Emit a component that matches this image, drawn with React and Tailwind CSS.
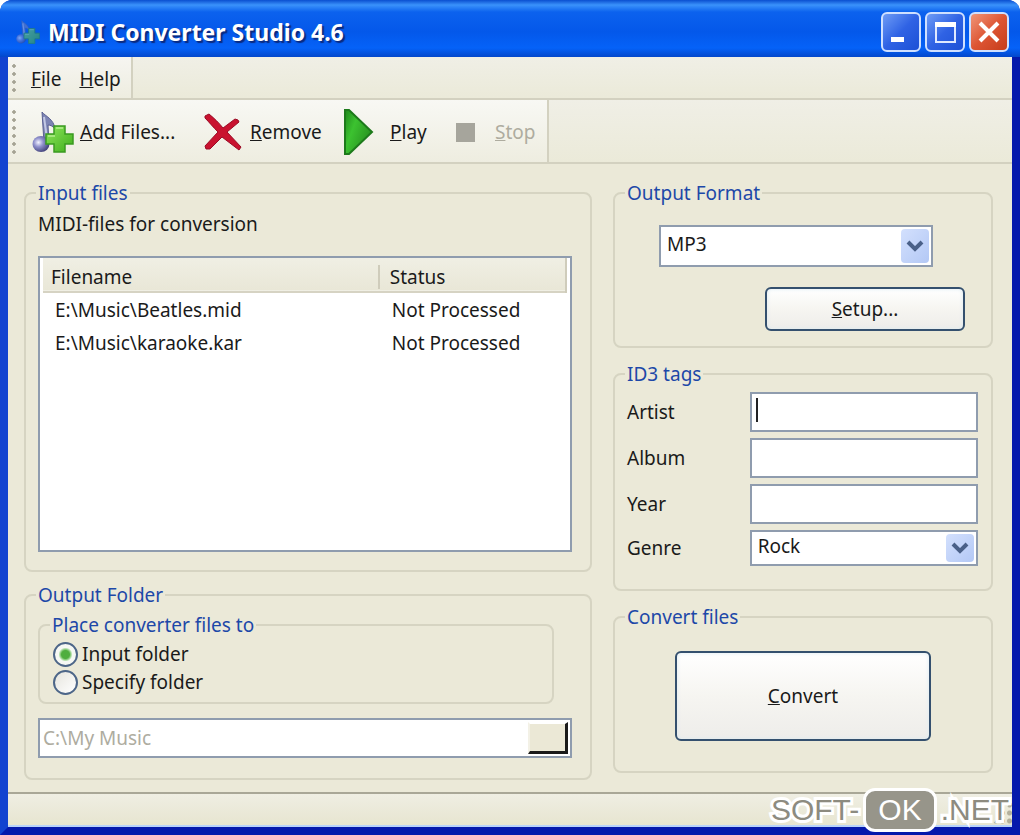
import { useState } from 'react';

const files = [
  { name: 'E:\\Music\\Beatles.mid', status: 'Not Processed' },
  { name: 'E:\\Music\\karaoke.kar', status: 'Not Processed' },
];

function NoteIcon({ className }) {
  return (
    <svg viewBox="0 0 42 42" className={className} aria-hidden="true">
      <defs>
        <radialGradient id="noteHead" cx="0.35" cy="0.4" r="0.7">
          <stop offset="0" stopColor="#f4f4ff" />
          <stop offset="0.4" stopColor="#8f90cc" />
          <stop offset="1" stopColor="#38386f" />
        </radialGradient>
        <linearGradient id="plusFill" x1="0" y1="0" x2="1" y2="1">
          <stop offset="0" stopColor="#8fe65c" />
          <stop offset="1" stopColor="#3fae1c" />
        </linearGradient>
      </defs>
      <path d="M10 1 C13 5 22 8 23 18 C21 15 18 14 16 14 L17 32 L12 32 Z" fill="#7d84b4" stroke="#5a6092" strokeWidth="1" />
      <path d="M12 6 L15 28" stroke="#c3c8e4" strokeWidth="2" />
      <ellipse cx="9" cy="33" rx="8.5" ry="8" fill="url(#noteHead)" />
      <path d="M22 15 h11 v8 h8 v10 h-8 v8 h-11 v-8 h-8 v-10 h8 z" fill="url(#plusFill)" stroke="#3a9a20" strokeWidth="1.5" />
      <path d="M24 17 h7 M16 25 h7" stroke="#b5f08e" strokeWidth="1.5" />
    </svg>
  );
}

function RemoveIcon() {
  return (
    <svg viewBox="0 0 38 38" className="h-[38px] w-[38px]" aria-hidden="true">
      <path d="M1 3 L5 1 C11 6 15 10 19 15 L31 6 L34 7 L35 9 L23 19 L37 34 L35 37 L18 24 L6 36 L2 36 L1 33 L14 19 C9 14 5 9 1 5 Z" fill="#c9122f" stroke="#9a0c26" strokeWidth="1" />
    </svg>
  );
}

function PlayIcon() {
  return (
    <svg viewBox="0 0 30 46" className="h-[46px] w-[30px]" aria-hidden="true">
      <defs>
        <linearGradient id="playFill" x1="0" y1="0" x2="1" y2="0.6">
          <stop offset="0" stopColor="#1f8a1c" />
          <stop offset="0.4" stopColor="#3cc230" />
          <stop offset="1" stopColor="#27901f" />
        </linearGradient>
      </defs>
      <path d="M1 1 H5 L28 23 L5 45 H1 Z" fill="url(#playFill)" stroke="#1d7a1b" strokeWidth="2" />
    </svg>
  );
}

function Grip({ className }) {
  return (
    <div className={`w-1 bg-[radial-gradient(circle,#a5a394_1.5px,transparent_2px)] bg-[length:4px_8px] ${className}`} />
  );
}

function GroupBox({ title, className, children }) {
  return (
    <fieldset className={`min-w-0 rounded-lg border-2 border-[#d6d4c2] pl-[10px] ${className}`}>
      <legend className="px-[2px] leading-6 text-[#1d48a8]">{title}</legend>
      {children}
    </fieldset>
  );
}

function Select({ id, label, value, options, onChange, className }) {
  return (
    <div className={`relative ${className}`}>
      <select
        id={id}
        aria-label={label}
        value={value}
        onChange={(e) => onChange(e.target.value)}
        className="block h-full w-full appearance-none border-2 border-[#8f9cae] bg-white pb-1 pl-[6px] outline-none"
      >
        {options.map((o) => (
          <option key={o}>{o}</option>
        ))}
      </select>
      <span className="pointer-events-none absolute inset-y-1 right-1 flex w-7 items-center justify-center rounded-sm bg-linear-to-br from-[#d3e0fd] to-[#b3c8f5]">
        <svg viewBox="0 0 18 12" className="h-3 w-[18px]" aria-hidden="true">
          <path d="M2 2 L9 9 L16 2" fill="none" stroke="#4a6088" strokeWidth="4" />
        </svg>
      </span>
    </div>
  );
}

function TitleBar() {
  const button = 'flex h-10 w-10 items-center justify-center rounded-md border-2 border-[#cfe0ff]';
  return (
    <header className="flex h-[57px] items-center bg-[linear-gradient(180deg,#0a4fd0_0,#3a92fb_5px,#0c62ee_12px,#0458ea_32px,#0562f8_48px,#0347cb_57px)] pt-[6px] pr-[11px] pl-4">
      <NoteIcon className="h-6 w-6 opacity-50" />
      <h1 className="ml-2 flex-1 text-[23px] leading-8 font-bold text-white [text-shadow:2px_2px_1px_#0a2a80]">
        MIDI Converter Studio 4.6
      </h1>
      <div className="flex gap-1">
        <button type="button" aria-label="Minimize" className={`${button} bg-linear-to-br from-[#6f9bf5] via-[#2f62e4] to-[#1c50d6]`}>
          <svg viewBox="0 0 24 24" className="h-6 w-6"><path d="M2 17 h13 v5 h-13 z" fill="#fff" /></svg>
        </button>
        <button type="button" aria-label="Maximize" className={`${button} bg-linear-to-br from-[#6f9bf5] via-[#2f62e4] to-[#1c50d6]`}>
          <svg viewBox="0 0 24 24" className="h-6 w-6"><path d="M3 3 h19 v19 h-19 z" fill="none" stroke="#dfe9ff" strokeWidth="2" /><path d="M2 2 h21 v5 h-21 z" fill="#fff" /></svg>
        </button>
        <button type="button" aria-label="Close" className={`${button} bg-linear-to-br from-[#ef9478] via-[#dd5533] to-[#c63c1a]`}>
          <svg viewBox="0 0 24 24" className="h-6 w-6"><path d="M3 3 L21 21 M21 3 L3 21" stroke="#fff" strokeWidth="4" /></svg>
        </button>
      </div>
    </header>
  );
}

function ToolBars() {
  return (
    <>
      <nav className="flex h-[43px] items-stretch border-b-2 border-[#d3d1c0] bg-linear-to-b from-[#f0efe6] to-[#ebead9]">
        <div className="flex items-center border-r-2 border-[#d3d1c0] bg-linear-to-b from-[#f6f5f1] to-[#eeede0] pr-[10px] pl-1">
          <Grip className="h-8" />
          <button type="button" className="ml-[15px] pt-[3px] leading-6"><u>F</u>ile</button>
          <button type="button" className="ml-[18px] pt-[3px] leading-6"><u>H</u>elp</button>
        </div>
      </nav>
      <div className="flex h-16 items-stretch border-b-2 border-[#d3d1c0] bg-linear-to-b from-[#f0efe6] to-[#ebead9]">
        <div className="flex items-center border-r-2 border-[#d3d1c0] bg-linear-to-b from-[#f8f8f4] to-[#eeede0] pt-[2px] pr-[10px] pl-1">
          <Grip className="h-12" />
          <button type="button" className="ml-4 flex items-center gap-[6px] leading-6">
            <NoteIcon className="h-[42px] w-[42px]" />
            <span className="w-[104px] text-left"><u>A</u>dd Files...</span>
          </button>
          <button type="button" className="ml-5 flex items-center gap-2 leading-6">
            <RemoveIcon />
            <span className="w-[76px] text-left"><u>R</u>emove</span>
          </button>
          <button type="button" className="ml-[18px] flex items-center gap-4 leading-6">
            <PlayIcon />
            <span className="w-10 text-left"><u>P</u>lay</span>
          </button>
          <button type="button" disabled className="ml-[26px] flex items-center gap-5 leading-6 text-[#aeac9f]">
            <span className="h-[19px] w-[19px] bg-[#a6a59c]" />
            <span className="w-[42px] text-left"><u>S</u>top</span>
          </button>
        </div>
      </div>
    </>
  );
}

function TagField({ id, label, caret }) {
  return (
    <>
      <label htmlFor={id} className="leading-6">{label}</label>
      <div className="relative">
        <input id={id} type="text" className="block h-10 w-full border-2 border-[#8f9cae] bg-white px-1 caret-transparent outline-none" />
        {caret && <span className="absolute top-[6px] left-[6px] h-6 w-[2px] bg-[#222]" />}
      </div>
    </>
  );
}

function Watermark() {
  return (
    <div className="pointer-events-none absolute right-[11px] bottom-[3px] flex items-center gap-1 font-['Liberation_Sans',sans-serif] text-[30px] leading-8 text-[#8d8b80]">
      <span className="[-webkit-text-stroke:6px_#fff] [paint-order:stroke]">SOFT-</span>
      <span className="rounded-xl border-[3px] border-white bg-[#97958a] px-3 py-[3px] text-white">OK</span>
      <span className="[-webkit-text-stroke:6px_#fff] [paint-order:stroke]">.NET</span>
    </div>
  );
}

export default function App() {
  const [format, setFormat] = useState('MP3');
  const [genre, setGenre] = useState('Rock');
  const [target, setTarget] = useState('input');

  const radio =
    'h-[25px] w-[25px] shrink-0 appearance-none rounded-full border-2 border-[#4d6688] bg-white bg-linear-to-br from-[#e6e5de] to-white checked:bg-[radial-gradient(circle,#4fae3f_4px,#b9e2b0_6px,#f6f8f4_7px)]';
  const pushButton =
    'rounded-md border-2 border-[#34506e] bg-linear-to-b from-white via-[#f6f5f1] to-[#eeedea] shadow-[inset_0_0_4px_#dcebf2]';

  return (
    <div className="relative flex min-h-screen flex-col overflow-hidden rounded-t-xl bg-[#0a3fd0] font-['Noto_Sans',sans-serif] text-[19px] text-[#1a1a1a]">
      <TitleBar />
      <div className="flex flex-1 flex-col border-x-8 border-b-8 border-r-[#0519ac] border-b-[#0519ac] border-l-[#1243d0]">
        <ToolBars />
        <main className="grid flex-1 grid-cols-[568fr_380fr] gap-[21px] bg-[#ebe9d8] pt-[17px] pr-[19px] pb-3 pl-4">
          <div className="flex flex-col gap-[11px]">
            <GroupBox title="Input files" className="flex flex-1 flex-col pr-[18px] pb-[18px]">
              <p className="mt-[7px] ml-[2px] leading-6">MIDI-files for conversion</p>
              <div className="mt-5 ml-[2px] flex-1 border-2 border-[#8f9cae] bg-white px-[3px]">
                <table className="w-full table-fixed text-left">
                  <thead>
                    <tr className="h-[34px] border-b-2 border-[#d6d3c3] bg-linear-to-b from-[#f0efe4] to-[#e9e7d7]">
                      <th className="w-[64%] p-0 pt-1 pl-2 leading-6 font-normal">Filename</th>
                      <th className="border-r-2 border-r-[#cfccbb] p-0 pt-1 font-normal">
                        <div className="border-l-2 border-[#cfccbb] pl-[10px] leading-6">Status</div>
                      </th>
                    </tr>
                  </thead>
                  <tbody>
                    {files.map((file) => (
                      <tr key={file.name} className="h-[34px]">
                        <td className="p-0 pl-3 leading-6">{file.name}</td>
                        <td className="p-0 pl-[14px] leading-6">{file.status}</td>
                      </tr>
                    ))}
                  </tbody>
                </table>
              </div>
            </GroupBox>

            <GroupBox title="Output Folder" className="pr-[18px] pb-5">
              <GroupBox title="Place converter files to" className="mt-[6px] mr-[18px] ml-[2px] pb-[6px]">
                <div className="pt-[3px]">
                  <label className="flex items-center gap-1 pl-[3px] leading-7">
                    <input type="radio" name="target" checked={target === 'input'} onChange={() => setTarget('input')} className={radio} />
                    Input folder
                  </label>
                  <label className="flex items-center gap-1 pl-[3px] leading-7">
                    <input type="radio" name="target" checked={target === 'specify'} onChange={() => setTarget('specify')} className={radio} />
                    Specify folder
                  </label>
                </div>
              </GroupBox>
              <div className="mt-[14px] ml-[2px] flex h-10 border-2 border-[#8f9cae] bg-white">
                <input
                  type="text"
                  disabled
                  aria-label="Output folder path"
                  defaultValue="C:\My Music"
                  className="min-w-0 flex-1 px-[3px] text-[#aeac9f]"
                />
                <button type="button" aria-label="Browse" className="my-[2px] mr-[2px] w-10 border-t-2 border-r-[3px] border-b-[3px] border-l-2 border-t-white border-r-[#1a1a1a] border-b-[#1a1a1a] border-l-[#f3f1e6] bg-[#ebe8d6]" />
              </div>
            </GroupBox>
          </div>

          <div className="flex flex-col gap-[14px]">
            <GroupBox title="Output Format" className="pr-[26px] pb-[15px]">
              <Select
                id="format"
                label="Output Format"
                value={format}
                options={['MP3', 'WAV', 'OGG', 'WMA']}
                onChange={setFormat}
                className="mt-5 mr-8 ml-[34px] h-[42px]"
              />
              <button type="button" className={`${pushButton} mt-5 ml-auto block h-11 w-[200px] leading-6`}>
                <u>S</u>etup...
              </button>
            </GroupBox>

            <GroupBox title="ID3 tags" className="pr-[13px] pb-[23px]">
              <div className="mt-[6px] grid grid-cols-[123fr_229fr] items-center gap-y-[6px] pl-[2px]">
                <TagField id="artist" label="Artist" caret />
                <TagField id="album" label="Album" />
                <TagField id="year" label="Year" />
                <label htmlFor="genre" className="leading-6">Genre</label>
                <Select
                  id="genre"
                  value={genre}
                  options={['Rock', 'Pop', 'Jazz', 'Blues']}
                  onChange={setGenre}
                  className="h-9"
                />
              </div>
            </GroupBox>

            <GroupBox title="Convert files" className="pr-[10px] pb-[30px]">
              <button type="button" className={`${pushButton} mx-auto mt-[22px] block h-[90px] w-[256px] leading-6`}>
                <u>C</u>onvert
              </button>
            </GroupBox>
          </div>
        </main>
        <footer className="flex h-[35px] items-end justify-end border-t-2 border-b-2 border-t-[#a9a797] border-b-[#b9d3fa] bg-linear-to-b from-[#efeee3] to-[#e7e5d0]">
          <span className="h-6 w-5 bg-[radial-gradient(circle,#b3b09c_2px,transparent_3px)] bg-[length:7px_8px] [clip-path:polygon(100%_0,100%_100%,0_100%)]" />
        </footer>
      </div>
      <Watermark />
    </div>
  );
}
